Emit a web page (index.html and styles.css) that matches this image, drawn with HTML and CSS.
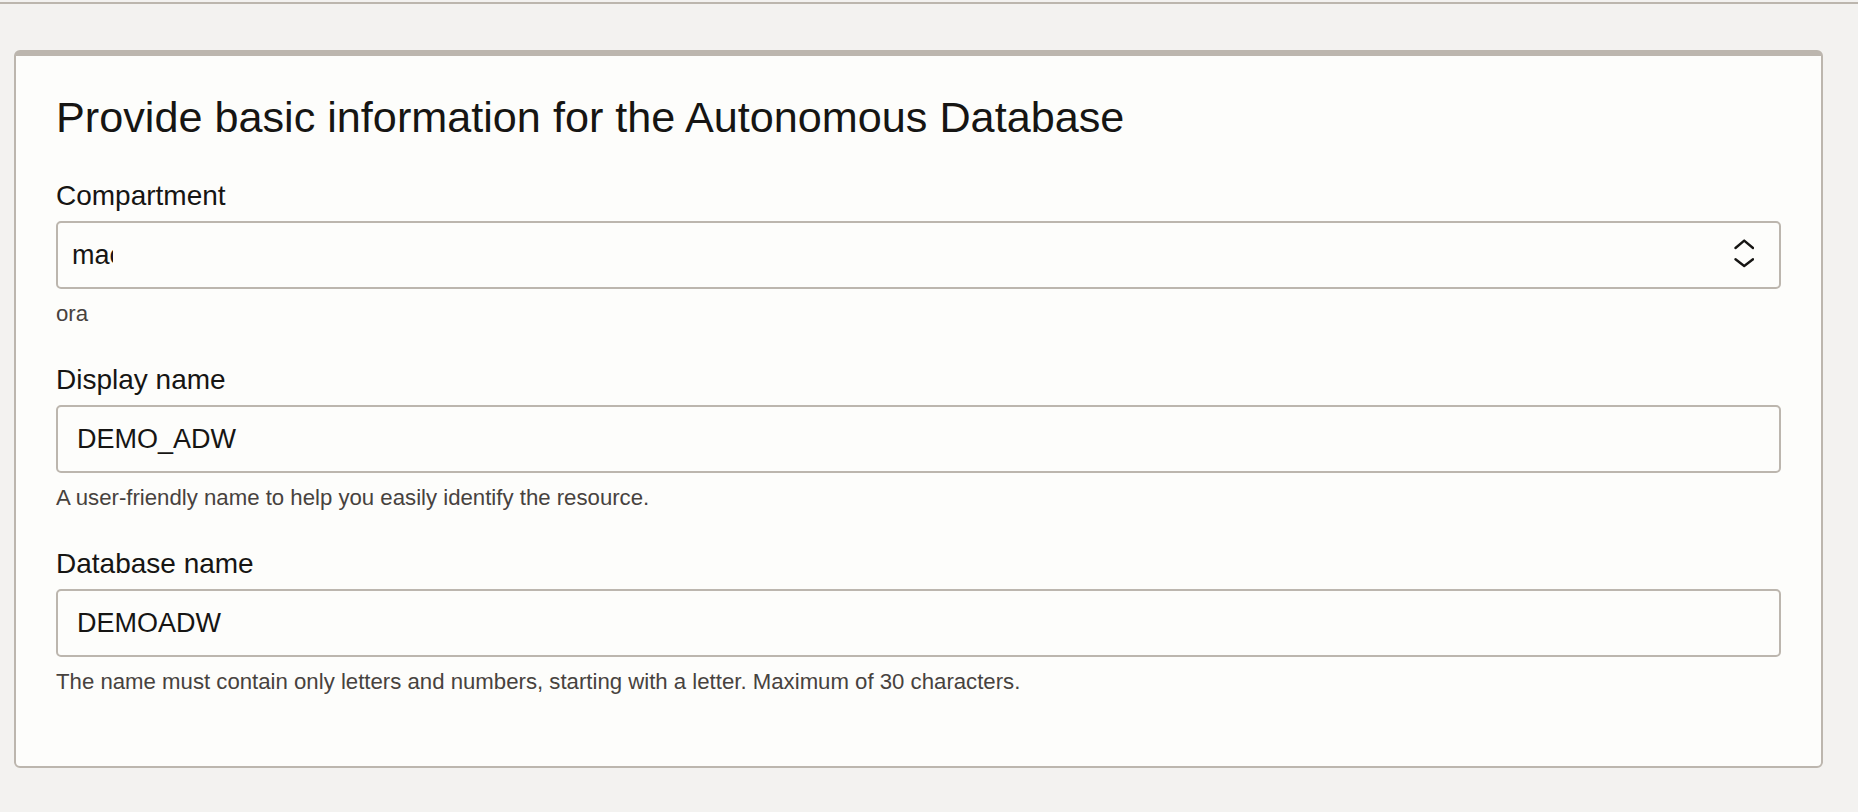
FILE: index.html
```html
<!DOCTYPE html>
<html lang="en">
<head>
<meta charset="utf-8">
<title>Autonomous Database</title>
<link rel="stylesheet" href="styles.css">
</head>
<body>
<div class="topbar"></div>
<main class="page">
  <section class="card">
    <h1 class="title">Provide basic information for the Autonomous Database</h1>
    <div class="field">
      <label class="label">Compartment</label>
      <div class="select">
        <span class="select-value"><span class="clip">mac</span></span>
        <svg class="chevrons" width="20" height="32" viewBox="0 0 20 32" aria-hidden="true">
          <path d="M1.5 9 L10.2 1.6 L19 9" fill="none" stroke="#161513" stroke-width="2.4" stroke-linecap="round" stroke-linejoin="round"/>
          <path d="M1.5 20.3 L10.2 27 L19 20.3" fill="none" stroke="#161513" stroke-width="2.4" stroke-linecap="round" stroke-linejoin="round"/>
        </svg>
      </div>
      <div class="help">ora</div>
    </div>
    <div class="field">
      <label class="label">Display name</label>
      <div class="input">DEMO_ADW</div>
      <div class="help">A user-friendly name to help you easily identify the resource.</div>
    </div>
    <div class="field">
      <label class="label">Database name</label>
      <div class="input">DEMOADW</div>
      <div class="help">The name must contain only letters and numbers, starting with a letter. Maximum of 30 characters.</div>
    </div>
  </section>
</main>
</body>
</html>
```
FILE: styles.css
```css
* { box-sizing: border-box; }
html, body {
  margin: 0;
  padding: 0;
  background: #f3f2f0;
  font-family: "Liberation Sans", Arial, sans-serif;
  color: #161513;
}
.topbar {
  height: 2px;
  margin-top: 2px;
  background: #bcb6ae;
}
.page {
  padding: 46px 35px 0 14px;
}
.card {
  background: #fdfdfb;
  border: 2px solid #bcb6ae;
  border-top-width: 6px;
  border-radius: 6px;
  padding: 35px 40px 70px 40px;
  display: flex;
  flex-direction: column;
}
.title {
  margin: 0 0 36px 0;
  font-size: 43.2px;
  line-height: 52px;
  font-weight: 400;
  color: #161513;
}
.field {
  display: flex;
  flex-direction: column;
}
.field + .field {
  margin-top: 35px;
}
.label {
  font-size: 28px;
  line-height: 34px;
  color: #161513;
}
.select, .input {
  margin-top: 8px;
  height: 68px;
  border: 2px solid #bcb6ae;
  border-radius: 5px;
  background: #fdfdfb;
  display: flex;
  align-items: center;
  font-size: 27px;
  color: #161513;
}
.input {
  padding-left: 19px;
}
.select {
  padding: 0 25px 0 14px;
  justify-content: space-between;
}
.clip {
  display: inline-block;
  width: 41px;
  overflow: hidden;
  white-space: nowrap;
  vertical-align: bottom;
}
.chevrons {
  display: block;
  flex: none;
}
.help {
  margin-top: 11px;
  font-size: 22.2px;
  line-height: 28px;
  color: #47423e;
}
```
